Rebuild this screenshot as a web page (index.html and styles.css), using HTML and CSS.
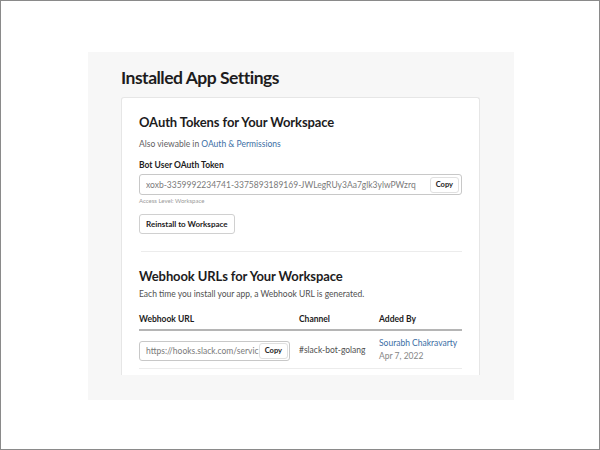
FILE: index.html
```html
<!DOCTYPE html>
<html>
<head>
<meta charset="utf-8">
<link rel="stylesheet" href="styles.css">
</head>
<body>
<div class="frame">
  <div class="panel">
    <h1 class="title">Installed App Settings</h1>
    <div class="card">
      <h2 class="section-title">OAuth Tokens for Your Workspace</h2>
      <p class="note">Also viewable in <a class="link">OAuth &amp; Permissions</a></p>
      <div class="label">Bot User OAuth Token</div>
      <div class="field">
        <span class="field-text">xoxb-3359992234741-3375893189169-JWLegRUy3Aa7glk3ylwPWzrq</span>
        <span class="copy">Copy</span>
      </div>
      <div class="hint">Access Level: Workspace</div>
      <div class="btn">Reinstall to Workspace</div>
      <hr class="divider">
      <h2 class="section-title second">Webhook URLs for Your Workspace</h2>
      <p class="desc">Each time you install your app, a Webhook URL is generated.</p>
      <div class="table">
        <div class="thead">
          <span>Webhook URL</span>
          <span>Channel</span>
          <span>Added By</span>
        </div>
        <div class="trow">
          <div class="field small">
            <span class="field-text">https://hooks.slack.com/servic</span>
            <span class="copy">Copy</span>
          </div>
          <span class="channel">#slack-bot-golang</span>
          <div class="added">
            <a class="link">Sourabh Chakravarty</a>
            <span class="date">Apr 7, 2022</span>
          </div>
        </div>
      </div>
    </div>
  </div>
</div>
</body>
</html>
```
FILE: styles.css
```css
html, body {
  margin: 0;
  padding: 0;
}
body {
  font-family: Lato, "Noto Sans", sans-serif;
  color: #1d1c1d;
}
.frame {
  width: 600px;
  height: 450px;
  box-sizing: border-box;
  border: 1px solid #8a8a8a;
  background: #fff;
  padding-top: 51px;
}
.panel {
  margin-left: 87px;
  width: 426px;
  height: 348px;
  box-sizing: border-box;
  background: #f7f7f7;
  padding: 14px 34px 0 33px;
  overflow: hidden;
}
.title {
  margin: 0;
  font-size: 17.5px;
  line-height: 24px;
  font-weight: 700;
  letter-spacing: -0.5px;
  color: #1d1c1d;
}
.card {
  margin-top: 7px;
  height: 278px;
  box-sizing: border-box;
  background: #fff;
  border: 1px solid #e6e6e6;
  border-bottom: none;
  border-radius: 3px 3px 0 0;
  padding: 15px 17px 0 17px;
}
.section-title {
  margin: 0;
  font-size: 13px;
  line-height: 18px;
  font-weight: 700;
  letter-spacing: -0.1px;
}
.note {
  margin: 7px 0 0;
  font-size: 8.5px;
  line-height: 12px;
  color: #616061;
}
.link {
  color: #3b6ea5;
  text-decoration: none;
}
.label {
  margin-top: 9px;
  font-size: 8.5px;
  line-height: 12px;
  font-weight: 700;
}
.field {
  margin-top: 3px;
  height: 21px;
  box-sizing: border-box;
  border: 1px solid #c8c8c8;
  border-radius: 3px;
  display: flex;
  align-items: center;
  padding: 0 2px 0 6px;
  background: #fff;
}
.field-text {
  flex: 1;
  min-width: 0;
  overflow: hidden;
  white-space: nowrap;
  font-size: 8.5px;
  color: #7a7a7a;
}
.copy {
  flex: none;
  height: 16px;
  box-sizing: border-box;
  border: 1px solid #e0e0e0;
  border-radius: 3px;
  padding: 0 5px;
  font-size: 7.5px;
  font-weight: 700;
  line-height: 14px;
  color: #1d1c1d;
  background: #fff;
}
.hint {
  margin-top: 1px;
  font-size: 6px;
  line-height: 9px;
  color: #9a9a9a;
}
.btn {
  margin-top: 9px;
  display: inline-block;
  height: 20px;
  box-sizing: border-box;
  border: 1px solid #d0d0d0;
  border-radius: 3px;
  padding: 0 6px;
  font-size: 8px;
  font-weight: 700;
  line-height: 18px;
}
.divider {
  margin: 17px 0 0 2px;
  border: none;
  border-top: 1px solid #ececec;
}
.section-title.second {
  margin-top: 15px;
}
.desc {
  margin: 3px 0 0;
  font-size: 8.5px;
  line-height: 12px;
  color: #505050;
}
.table {
  margin-top: 13px;
}
.thead {
  display: grid;
  grid-template-columns: 160px 80px 1fr;
  font-size: 8.5px;
  font-weight: 700;
  line-height: 12px;
  padding-bottom: 4px;
  border-bottom: 2px solid #b5b5b5;
}
.trow {
  display: grid;
  grid-template-columns: 160px 80px 1fr;
  align-items: center;
  padding: 6px 0 5px;
  border-bottom: 1px solid #ececec;
}
.field.small {
  margin-top: 2px;
  width: 151px;
  height: 20px;
  padding: 0 1px 0 6px;
}
.channel {
  font-size: 8.5px;
  color: #505050;
}
.added {
  display: flex;
  flex-direction: column;
  font-size: 8.5px;
  line-height: 13px;
}
.date {
  color: #868686;
}
```
